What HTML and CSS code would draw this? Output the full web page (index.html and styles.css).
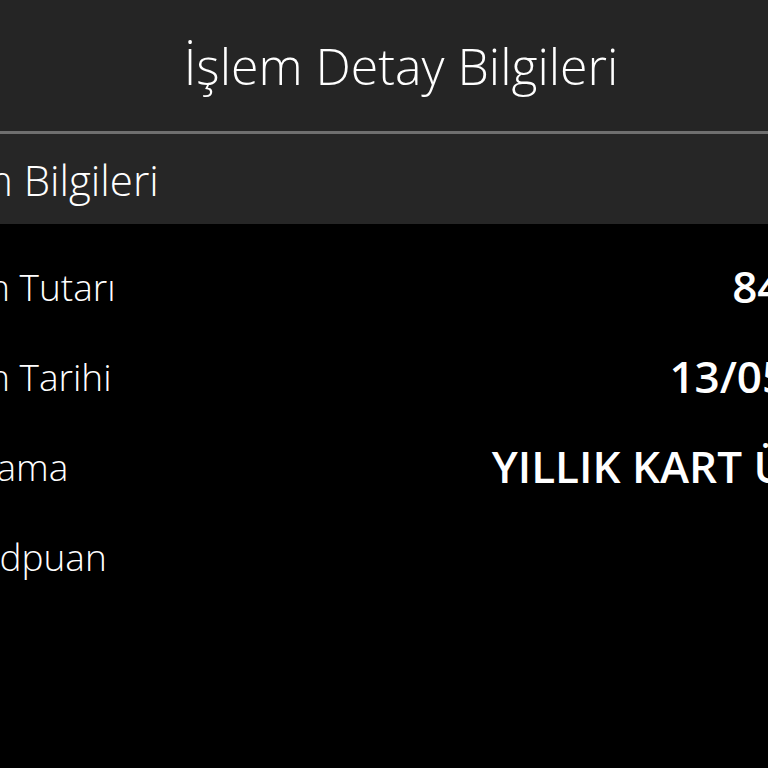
FILE: index.html
```html
<!DOCTYPE html>
<html lang="tr">
<head>
<meta charset="utf-8">
<title>İşlem Detay Bilgileri</title>
<link rel="stylesheet" href="styles.css">
</head>
<body>
<div class="page">
  <header class="topbar">
    <h1 class="title">İşlem Detay Bilgileri</h1>
  </header>
  <div class="divider"></div>
  <div class="section-bar">
    <span class="section-title">İşlem Bilgileri</span>
  </div>
  <div class="rows">
    <div class="row"><span class="label">İşlem Tutarı</span><span class="value">84,00 TL</span></div>
    <div class="row"><span class="label">İşlem Tarihi</span><span class="value">13/05/2019</span></div>
    <div class="row"><span class="label">Açıklama</span><span class="value">YILLIK KART ÜCRETİ</span></div>
    <div class="row"><span class="label">Worldpuan</span><span class="value"></span></div>
  </div>
</div>
</body>
</html>
```
FILE: styles.css
```css
html, body {
  margin: 0;
  padding: 0;
  background: #000;
  overflow: hidden;
  height: 768px;
}
.page {
  width: 1012px;
  margin-left: -105px;
  font-family: "Open Sans", "Liberation Sans", sans-serif;
  color: #fff;
}
.topbar {
  height: 131px;
  background: #252525;
  display: flex;
  align-items: center;
  justify-content: center;
}
.title {
  margin: 0;
  font-size: 50px;
  font-weight: 300;
  line-height: 1.2;
}
.divider {
  height: 3px;
  background: #6f6f6f;
}
.section-bar {
  height: 90px;
  background: #262626;
  display: flex;
  align-items: center;
  padding: 0 18px;
}
.section-title {
  font-size: 42px;
  font-weight: 300;
}
.rows {
  padding-top: 17px;
}
.row {
  height: 90px;
  display: flex;
  align-items: center;
  justify-content: space-between;
  padding: 0 2px 0 27px;
}
.label {
  font-size: 37px;
  font-weight: 300;
}
.value {
  font-size: 44px;
  font-weight: 600;
}
```
